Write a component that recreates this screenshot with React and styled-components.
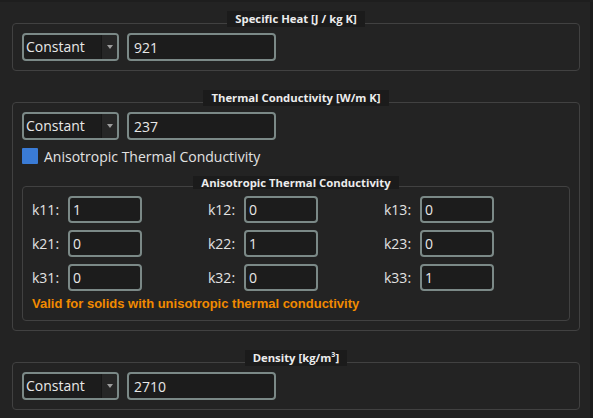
import React from "react";
import styled, { createGlobalStyle } from "styled-components";

const GlobalStyle = createGlobalStyle`
  body {
    margin: 0;
    background: #232323;
    font-family: "Open Sans", "Noto Sans", sans-serif;
  }
`;

const Page = styled.div`
  display: flex;
  height: 418px;
  box-sizing: border-box;
  border-top: 2px solid #1e1e1e;
  background: #232323;
`;

const Main = styled.div`
  flex: 1;
  display: flex;
  flex-direction: column;
  gap: 19px;
  padding: 9px 10px 0 12px;
`;

const ScrollTrack = styled.div`
  width: 10px;
  background: #1b1b1b;
`;

const Group = styled.div`
  display: flex;
  flex-direction: column;
  margin-top: ${(p) => p.$top || 0}px;
`;

const Title = styled.div`
  align-self: center;
  position: relative;
  z-index: 1;
  height: ${(p) => (p.$small ? 13 : 16)}px;
  line-height: ${(p) => (p.$small ? 13 : 16)}px;
  margin-bottom: ${(p) => (p.$small ? -3 : -4)}px;
  padding: 0 8px;
  background: #1b1b1b;
  color: #ececec;
  font-size: 11.3px;
  font-weight: 700;
  white-space: nowrap;
`;

const Frame = styled.div`
  display: flex;
  flex-direction: column;
  border: 1px solid #414141;
  border-radius: 4px;
  padding: 9px;
`;

const Row = styled.div`
  display: flex;
  gap: 8px;
`;

const Select = styled.div`
  display: flex;
  width: 97px;
  height: 28px;
  box-sizing: border-box;
  border: 2px solid #7b8987;
  border-radius: 4px;
  background: #1c1c1c;
  overflow: hidden;
`;

const SelectValue = styled.div`
  flex: 1;
  padding-left: 2px;
  line-height: 24px;
  color: #e8e8e8;
  font-size: 14px;
`;

const SelectArrow = styled.div`
  width: 15px;
  display: flex;
  align-items: center;
  justify-content: center;
  background: #262626;
  border-left: 1px solid #161616;

  &::after {
    content: "";
    border-left: 3.5px solid transparent;
    border-right: 3.5px solid transparent;
    border-top: 4px solid #9c9c9c;
  }
`;

const Field = styled.input`
  width: ${(p) => p.$w}px;
  height: ${(p) => p.$h}px;
  box-sizing: border-box;
  border: 2px solid #7b8987;
  border-radius: 4px;
  background: #1c1c1c;
  color: #e8e8e8;
  font-family: "Open Sans", "Noto Sans", sans-serif;
  font-size: 14px;
  padding: 0 ${(p) => p.$pad}px;
  outline: none;
`;

const CheckRow = styled.div`
  display: flex;
  align-items: center;
  height: 18px;
  margin-top: 7px;
  color: #e2e2e2;
  font-size: 14px;
`;

const CheckBox = styled.div`
  width: 16px;
  height: 16px;
  margin-right: 6px;
  border-radius: 1px;
  background: #3a7bd6;
`;

const KGrid = styled.div`
  display: grid;
  grid-template-columns: repeat(3, 176px);
  row-gap: 7px;
`;

const KCell = styled.div`
  display: flex;
  align-items: center;
`;

const KLabel = styled.span`
  width: 36px;
  color: #e2e2e2;
  font-size: 14px;
`;

const Note = styled.div`
  margin-top: 6px;
  line-height: 14px;
  color: #f18a00;
  font-family: "Liberation Sans", Arial, sans-serif;
  font-size: 13px;
  font-weight: 700;
`;

const ConstantInput = ({ value }) => (
  <Row>
    <Select>
      <SelectValue>Constant</SelectValue>
      <SelectArrow />
    </Select>
    <Field $w={149} $h={28} $pad={5} defaultValue={value} readOnly />
  </Row>
);

const tensor = [
  ["k11", "1"],
  ["k12", "0"],
  ["k13", "0"],
  ["k21", "0"],
  ["k22", "1"],
  ["k23", "0"],
  ["k31", "0"],
  ["k32", "0"],
  ["k33", "1"],
];

const App = () => {
  return (
    <>
      <GlobalStyle />
      <Page>
        <Main>
          <Group>
            <Title>Specific Heat [J / kg K]</Title>
            <Frame>
              <ConstantInput value="921" />
            </Frame>
          </Group>

          <Group>
            <Title>Thermal Conductivity [W/m K]</Title>
            <Frame>
              <ConstantInput value="237" />
              <CheckRow>
                <CheckBox />
                Anisotropic Thermal Conductivity
              </CheckRow>
              <Group $top={11}>
                <Title $small>Anisotropic Thermal Conductivity</Title>
                <Frame>
                  <KGrid>
                    {tensor.map(([name, v]) => (
                      <KCell key={name}>
                        <KLabel>{name}:</KLabel>
                        <Field $w={74} $h={27} $pad={3} defaultValue={v} readOnly />
                      </KCell>
                    ))}
                  </KGrid>
                  <Note>Valid for solids with unisotropic thermal conductivity</Note>
                </Frame>
              </Group>
            </Frame>
          </Group>

          <Group>
            <Title>Density [kg/m³]</Title>
            <Frame>
              <ConstantInput value="2710" />
            </Frame>
          </Group>
        </Main>
        <ScrollTrack />
      </Page>
    </>
  );
};

export default App;
